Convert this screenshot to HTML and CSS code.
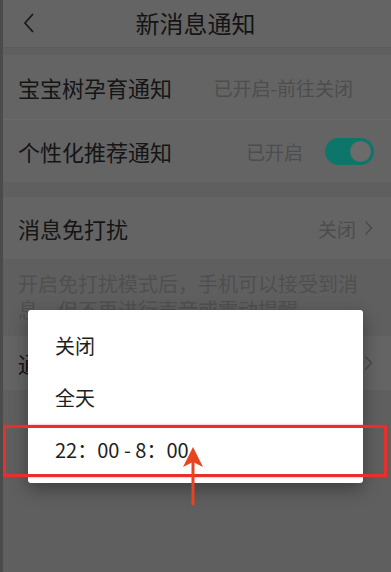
FILE: index.html
```html
<!DOCTYPE html>
<html lang="zh-CN">
<head>
<meta charset="utf-8">
<title>新消息通知</title>
<link rel="stylesheet" href="styles.css">
</head>
<body>
<div class="screen">
  <header class="header">
    <svg class="back" width="14" height="22" viewBox="0 0 14 22"><polyline points="11,2 3,11 11,20" fill="none" stroke="#1a1a1a" stroke-width="1.8"/></svg>
    <h1 class="title">新消息通知</h1>
  </header>
  <div class="gap gap-top"></div>
  <section class="group">
    <div class="row row-line">
      <span class="label">宝宝树孕育通知</span>
      <span class="value value-pad">已开启-前往关闭</span>
    </div>
    <div class="row row-tall">
      <span class="label">个性化推荐通知</span>
      <span class="value-wrap">
        <span class="value">已开启</span>
        <span class="toggle"><span class="knob"></span></span>
      </span>
    </div>
  </section>
  <div class="gap gap-mid"></div>
  <section class="group">
    <div class="row row-tall">
      <span class="label">消息免打扰</span>
      <span class="value-wrap">
        <span class="value">关闭</span>
        <svg class="chev" width="9" height="16" viewBox="0 0 9 16"><polyline points="1.5,1.5 7.5,8 1.5,14.5" fill="none" stroke="#4c4c4c" stroke-width="1.5"/></svg>
      </span>
    </div>
  </section>
  <p class="desc">开启免打扰模式后，手机可以接受到消息，但不再进行声音或震动提醒。</p>
  <section class="group">
    <div class="row row-short">
      <span class="label">通知时段</span>
      <span class="value-wrap">
        <svg class="chev" width="9" height="16" viewBox="0 0 9 16"><polyline points="1.5,1.5 7.5,8 1.5,14.5" fill="none" stroke="#4c4c4c" stroke-width="1.5"/></svg>
      </span>
    </div>
  </section>

  <div class="dialog">
    <div class="item">关闭</div>
    <div class="item">全天</div>
    <div class="item">22：00 - 8：00</div>
  </div>

  <div class="mark"></div>
  <svg class="arrow" width="24" height="62" viewBox="0 0 24 62">
    <line x1="12" y1="60" x2="12" y2="16" stroke="#e8441f" stroke-width="3"/>
    <polygon points="12,2 2,22 12,17 22,22" fill="#e8441f"/>
  </svg>
</div>
</body>
</html>
```

FILE: styles.css
```css
html, body {
  margin: 0;
  padding: 0;
  background: #5f5f5f;
}

.screen {
  position: relative;
  width: 391px;
  height: 572px;
  overflow: hidden;
  box-sizing: border-box;
  border-left: 3px solid #4b4b4b;
  background: #5f5f5f;
  font-family: "Noto Sans CJK SC", "Noto Sans", sans-serif;
}

.header {
  height: 47px;
  background: #646464;
  border-bottom: 1px solid #5b5b5b;
  display: flex;
  align-items: center;
  justify-content: center;
  position: relative;
}

.back {
  position: absolute;
  left: 19px;
  top: 12px;
}

.title {
  margin: 0 0 2px -3px;
  font-size: 24px;
  font-weight: 400;
  color: #141414;
  line-height: 1;
}

.gap-top { height: 7px; }
.gap-mid { height: 15px; }

.group {
  background: #646464;
}

.row {
  display: flex;
  align-items: center;
  justify-content: space-between;
  padding: 0 17px 0 15px;
  height: 64px;
}

.row-line {
  border-bottom: 1px solid #6a6a6a;
}

.row-tall {
  height: 62px;
}

.row-short {
  height: 54px;
}

.label {
  font-size: 22px;
  color: #151515;
  line-height: 1;
}

.value {
  font-size: 19px;
  color: #4d4d4d;
  line-height: 1;
}

.value-pad {
  margin-right: 21px;
}

.value-wrap {
  display: flex;
  align-items: center;
  gap: 8px;
}

.value-wrap .value + .toggle {
  margin-left: 14px;
}

.chev {
  margin-right: 1px;
}

.toggle {
  width: 49px;
  height: 27px;
  border-radius: 14px;
  background: #0d756a;
  display: flex;
  align-items: center;
  justify-content: flex-end;
  padding-right: 3px;
  box-sizing: border-box;
}

.knob {
  width: 21px;
  height: 21px;
  border-radius: 50%;
  background: #6b6b6b;
}

.desc {
  margin: 0;
  padding: 12px 20px 13px 15px;
  font-size: 20px;
  line-height: 26px;
  color: #4f4f4f;
  background: #5f5f5f;
}

.dialog {
  position: absolute;
  left: 25px;
  top: 310px;
  width: 335px;
  height: 173px;
  box-sizing: border-box;
  padding-top: 9px;
  background: #ffffff;
  border-radius: 3px;
  box-shadow: 0 6px 18px rgba(0, 0, 0, 0.35);
}

.item {
  height: 52px;
  display: flex;
  align-items: center;
  padding-left: 27px;
  font-size: 20px;
  color: #1e1e1e;
}

.mark {
  position: absolute;
  left: 0;
  top: 425px;
  width: 384px;
  height: 52px;
  box-sizing: border-box;
  border: 3px solid #e5302b;
  box-shadow: 0 0 2px rgba(229, 48, 43, 0.6);
}

.arrow {
  position: absolute;
  left: 178px;
  top: 445px;
}
```
